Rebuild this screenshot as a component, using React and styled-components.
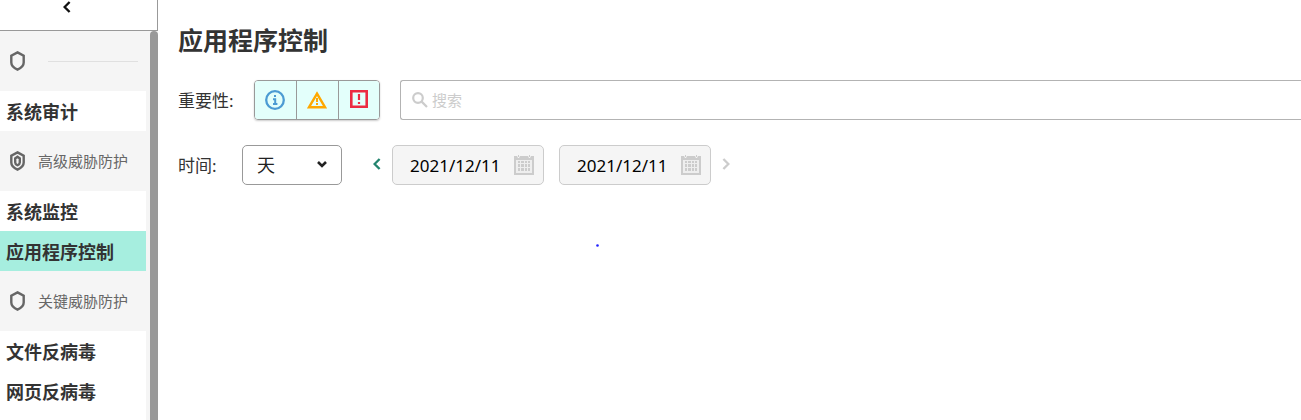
import React from "react";
import styled, { createGlobalStyle } from "styled-components";

const groups = [
  { icon: "shield", title: "", items: ["系统审计"] },
  { icon: "double", title: "高级威胁防护", items: ["系统监控", "应用程序控制"] },
  { icon: "shield", title: "关键威胁防护", items: ["文件反病毒", "网页反病毒"] },
];

const ShieldIcon = ({ double }) => (
  <svg width="16" height="20" viewBox="0 0 16 20" fill="none" stroke="#666" aria-hidden="true">
    <path
      d="M7.5 1.4 L13.7 4.8 V11.5 C13.7 14.4 10.8 17.2 7.5 18.6 C4.2 17.2 1.3 14.4 1.3 11.5 V4.8 Z"
      strokeWidth="2.4"
    />
    {double && <path d="M7.5 5.8 L9.8 7.4 V11.4 C9.8 12.6 8.7 13.6 7.5 14.2 C6.3 13.6 5.2 12.6 5.2 11.4 V7.4 Z" strokeWidth="2.4" />}
  </svg>
);

const LeftIcon = () => (
  <svg width="8" height="12" viewBox="0 0 8 12" fill="none" stroke="currentColor" strokeWidth="2.4" aria-hidden="true">
    <path d="M6.6 1 L1.6 6 L6.6 11" />
  </svg>
);

const RightIcon = () => (
  <svg width="8" height="12" viewBox="0 0 8 12" fill="none" stroke="currentColor" strokeWidth="2.4" aria-hidden="true">
    <path d="M1.4 1 L6.4 6 L1.4 11" />
  </svg>
);

const InfoIcon = () => (
  <svg width="20" height="20" viewBox="0 0 20 20" fill="none" stroke="#4c9bd3" strokeWidth="2.3" aria-hidden="true">
    <circle cx="10" cy="10" r="8.8" />
    <path d="M10 5 V7 M8 9.2 H10.2 V14 M8 14 H12.4" strokeWidth="2" />
  </svg>
);

const WarningIcon = () => (
  <svg width="20" height="18" viewBox="0 0 20 18" fill="none" stroke="#ffa800" aria-hidden="true">
    <path d="M10 2.6 L18 16.2 H2 Z" strokeWidth="2.5" />
    <path d="M10 7 V11 M10 12 V14" strokeWidth="2" />
  </svg>
);

const CriticalIcon = () => (
  <svg width="18" height="20" viewBox="0 0 18 20" fill="none" stroke="#ec2b42" aria-hidden="true">
    <path d="M1.3 1.3 H16.7 V16.7 H1.3 Z" strokeWidth="2.6" />
    <path d="M9 4 V10 M9 12 V14" strokeWidth="2.2" />
  </svg>
);

const SearchIcon = () => (
  <svg width="16" height="16" viewBox="0 0 16 16" fill="none" stroke="#ccc" strokeWidth="2.2" aria-hidden="true">
    <circle cx="6" cy="6" r="4.8" />
    <path d="M9.4 9.4 L15 15" />
  </svg>
);

const CalendarIcon = () => (
  <svg width="20" height="20" viewBox="0 0 20 20" aria-hidden="true">
    <path d="M0 1 H3 L4 3 H5 L6 1 H14 L15 3 H16 L17 1 H20 V20 H0 Z" fill="#ccc" />
    <path d="M4 0 H5 V2 H4 Z M15 0 H16 V2 H15 Z" fill="#ccc" />
    <path d="M2 5 H18 V18 H2 Z" fill="#eee" />
    <path
      d="M4 6h2v2h-2z M7 6h3v2h-3z M11 6h2v2h-2z M14 6h2v2h-2z M4 9h2v3h-2z M7 9h3v3h-3z M11 9h2v3h-2z M14 9h2v3h-2z M4 13h2v3h-2z M7 13h3v3h-3z M11 13h2v3h-2z M14 13h2v3h-2z"
      fill="#ccc"
    />
  </svg>
);

const DateField = ({ label }) => (
  <DateBox>
    <input type="text" aria-label={label} defaultValue="2021/12/11" />
    <CalendarIcon />
  </DateBox>
);

const App = () => {
  return (
    <PageStyle>
      <GlobalStyle />
      <Sidebar>
        <CollapseButton aria-label="收起">
          <LeftIcon />
        </CollapseButton>
        <NavArea>
          <Nav>
            {groups.map((group, i) => (
              <React.Fragment key={i}>
                <GroupTitle>
                  <ShieldIcon double={group.icon === "double"} />
                  {group.title ? <span>{group.title}</span> : <hr />}
                </GroupTitle>
                {group.items.map((item) => (
                  <NavLink href="#" key={item} $active={item === "应用程序控制"}>
                    {item}
                  </NavLink>
                ))}
              </React.Fragment>
            ))}
            <NavRest />
          </Nav>
          <ScrollThumb />
        </NavArea>
      </Sidebar>
      <Main>
        <Title>应用程序控制</Title>
        <FilterRow>
          <Label as="span" $width={76}>
            重要性:
          </Label>
          <SeverityGroup role="group" aria-label="重要性">
            <button aria-label="信息">
              <InfoIcon />
            </button>
            <button aria-label="警告">
              <WarningIcon />
            </button>
            <button aria-label="严重">
              <CriticalIcon />
            </button>
          </SeverityGroup>
          <SearchBox>
            <SearchIcon />
            <input type="text" placeholder="搜索" aria-label="搜索" />
          </SearchBox>
        </FilterRow>
        <FilterRow>
          <Label htmlFor="period" $width={64}>
            时间:
          </Label>
          <SelectBox>
            <select id="period" defaultValue="day">
              <option value="day">天</option>
            </select>
            <svg width="10" height="8" viewBox="0 0 10 8" fill="none" stroke="#222" strokeWidth="2.6" aria-hidden="true">
              <path d="M1 1 L5 5 L9 1" />
            </svg>
          </SelectBox>
          <DateRange>
            <StepButton aria-label="上一个" $color="#23846e">
              <LeftIcon />
            </StepButton>
            <DateField label="开始日期" />
            <DateField label="结束日期" />
            <StepButton aria-label="下一个" $color="#ccc" $next>
              <RightIcon />
            </StepButton>
          </DateRange>
        </FilterRow>
        <ChartArea>
          <svg width="3" height="3" viewBox="0 0 3 3" fill="#22f" aria-hidden="true">
            <circle cx="1.5" cy="1.5" r="1.3" />
          </svg>
        </ChartArea>
      </Main>
    </PageStyle>
  );
};

export default App;

const GlobalStyle = createGlobalStyle`
  * {
    box-sizing: border-box;
  }
  body {
    margin: 0;
    background: #fff;
    color: #333;
  }
  body, button, input, select {
    font-family: "Noto Sans", "Noto Sans CJK SC", sans-serif;
  }
  svg {
    display: block;
    flex-shrink: 0;
  }
`;

const PageStyle = styled.div`
  display: flex;
  height: 100vh;
  overflow: hidden;
`;

const Sidebar = styled.aside`
  display: flex;
  flex-direction: column;
  flex: 0 0 158px;
`;

const CollapseButton = styled.button`
  display: flex;
  justify-content: center;
  flex: 0 0 31px;
  padding: 1px 24px 0 0;
  border: 0;
  border-right: 1px solid #999;
  border-bottom: 1px solid #999;
  background: #fff;
  color: #111;
`;

const NavArea = styled.div`
  display: flex;
  flex: 1;
  min-height: 0;
  background: #f5f5f5;
`;

const Nav = styled.nav`
  display: flex;
  flex-direction: column;
  flex: 1;
  padding-right: 4px;
  overflow: hidden;
`;

const ScrollThumb = styled.div`
  width: 8px;
  border-radius: 4px 4px 0 0;
  background: #999;
`;

const GroupTitle = styled.div`
  display: flex;
  align-items: center;
  flex: 0 0 60px;
  padding: 0 8px 0 10px;
  color: #666;
  font-size: 15px;
  line-height: 20px;
  white-space: nowrap;
  span {
    margin-left: 12px;
  }
  hr {
    flex: 1;
    margin: 0 0 0 22px;
    border: 0;
    border-top: 1px solid #e0e0e0;
  }
`;

const NavLink = styled.a`
  flex: 0 0 40px;
  padding: 2px 0 0 6px;
  background: ${(props) => (props.$active ? "#a6eedf" : "#fff")};
  color: #333;
  font-size: 18px;
  font-weight: bold;
  line-height: 38px;
  text-decoration: none;
`;

const NavRest = styled.div`
  flex: 1;
  background: #fff;
`;

const Main = styled.main`
  flex: 1;
  min-width: 0;
  padding: 20px 0 0 20px;
`;

const Title = styled.h1`
  margin: 0 0 20px;
  font-size: 25px;
  line-height: 40px;
`;

const FilterRow = styled.div`
  display: flex;
  align-items: center;
  margin-bottom: 25px;
`;

const Label = styled.label`
  flex: 0 0 ${(props) => props.$width}px;
  padding-top: 2px;
  font-size: 17px;
  line-height: 38px;
`;

const SeverityGroup = styled.div`
  display: flex;
  height: 40px;
  border: 1px solid #999;
  border-radius: 4px;
  overflow: hidden;
  box-shadow: 0 1px 2px #ccc;
  button {
    display: flex;
    align-items: center;
    justify-content: center;
    width: 42px;
    padding: 0 1px 0 0;
    border: 0;
    border-right: 1px solid #999;
    background: #e3fffb;
  }
  button:last-child {
    width: 40px;
    padding: 0;
    border-right: 0;
  }
`;

const SearchBox = styled.div`
  display: flex;
  align-items: center;
  flex: 1;
  height: 40px;
  margin-left: 20px;
  padding-left: 11px;
  border: 1px solid #b3b3b3;
  border-right: 0;
  border-radius: 3px 0 0 3px;
  input {
    flex: 1;
    min-width: 0;
    padding: 0 0 0 4px;
    border: 0;
    outline: 0;
    background: none;
    font-size: 15px;
    line-height: 24px;
  }
  input::placeholder {
    color: #ccc;
    opacity: 1;
  }
`;

const SelectBox = styled.div`
  display: grid;
  grid-template-columns: 1fr 25px;
  align-items: center;
  width: 100px;
  height: 40px;
  select {
    grid-area: 1 / 1 / 2 / 3;
    height: 40px;
    padding: 0 14px;
    appearance: none;
    border: 1px solid #999;
    border-radius: 5px;
    background: #fff;
    color: #222;
    font-size: 18px;
  }
  svg {
    grid-area: 1 / 2;
    pointer-events: none;
  }
`;

const DateRange = styled.div`
  display: flex;
  align-items: center;
  margin-left: 30px;
`;

const StepButton = styled.button`
  display: flex;
  justify-content: ${(props) => (props.$next ? "flex-end" : "flex-start")};
  width: 20px;
  padding: 0 1px 2px;
  border: 0;
  background: none;
  color: ${(props) => props.$color};
`;

const DateBox = styled.div`
  display: flex;
  align-items: center;
  width: 152px;
  height: 40px;
  padding: 0 9px 0 17px;
  border: 1px solid #ccc;
  border-radius: 5px;
  background: #f5f5f5;
  & + & {
    margin-left: 15px;
  }
  input {
    flex: 1;
    min-width: 0;
    padding: 2px 0 0;
    border: 0;
    outline: 0;
    background: none;
    color: #000;
    font-size: 17px;
    line-height: 24px;
  }
`;

const ChartArea = styled.div`
  padding: 34px 0 0 418px;
`;
